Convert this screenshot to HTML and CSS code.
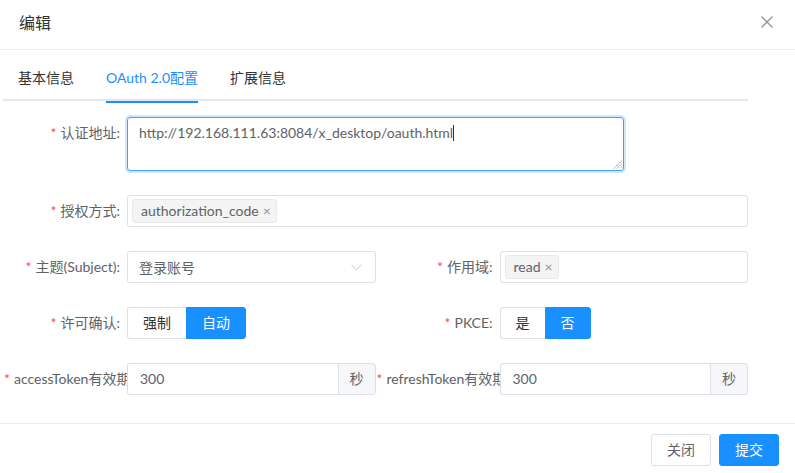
FILE: index.html
```html
<!DOCTYPE html>
<html lang="zh-CN">
<head>
<meta charset="utf-8">
<link rel="stylesheet" href="styles.css">
</head>
<body>
<div class="dialog">
  <div class="dlg-header">
    <span class="dlg-title">编辑</span>
    <svg class="dlg-close" width="12" height="12" viewBox="0 0 12 12"><path d="M0.5 0.5 L11.5 11.5 M11.5 0.5 L0.5 11.5" stroke="#909399" stroke-width="1.3" fill="none"/></svg>
  </div>
  <div class="dlg-body">
    <div class="tabs">
      <div class="tab">基本信息</div>
      <div class="tab active">OAuth 2.0配置</div>
      <div class="tab">扩展信息</div>
    </div>
    <div class="form">
      <div class="row">
        <div class="item full">
          <label class="lbl"><span class="req">*</span>认证地址:</label>
          <div class="ctl">
            <div class="textarea">http://192.168.111.63:8084/x_desktop/oauth.html<span class="caret"></span>
              <svg class="grip" width="9" height="9" viewBox="0 0 9 9"><path d="M8.5 1 L1 8.5 M8.5 4 L4 8.5 M8.5 7 L7 8.5" stroke="#555" stroke-width="1" stroke-dasharray="1 1" fill="none"/></svg>
            </div>
          </div>
        </div>
      </div>
      <div class="row">
        <div class="item full">
          <label class="lbl"><span class="req">*</span>授权方式:</label>
          <div class="ctl">
            <div class="input tags"><span class="tag">authorization_code<span class="tag-x">×</span></span></div>
          </div>
        </div>
      </div>
      <div class="row">
        <div class="item">
          <label class="lbl"><span class="req">*</span>主题(Subject):</label>
          <div class="ctl">
            <div class="input select">登录账号
              <svg class="arrow" width="11" height="7" viewBox="0 0 11 7"><path d="M0.5 0.8 L5.5 5.8 L10.5 0.8" stroke="#c0c4cc" stroke-width="1" fill="none"/></svg>
            </div>
          </div>
        </div>
        <div class="item">
          <label class="lbl"><span class="req">*</span>作用域:</label>
          <div class="ctl">
            <div class="input tags"><span class="tag">read<span class="tag-x">×</span></span></div>
          </div>
        </div>
      </div>
      <div class="row">
        <div class="item">
          <label class="lbl"><span class="req">*</span>许可确认:</label>
          <div class="ctl">
            <div class="radio-group"><span class="rb w59">强制</span><span class="rb on w60">自动</span></div>
          </div>
        </div>
        <div class="item">
          <label class="lbl"><span class="req">*</span>PKCE:</label>
          <div class="ctl">
            <div class="radio-group"><span class="rb w45">是</span><span class="rb on w46">否</span></div>
          </div>
        </div>
      </div>
      <div class="row">
        <div class="item">
          <label class="lbl clip"><span class="req">*</span>accessToken有效期:</label>
          <div class="ctl">
            <div class="input-group"><span class="ig-in">300</span><span class="ig-append">秒</span></div>
          </div>
        </div>
        <div class="item">
          <label class="lbl clip"><span class="req">*</span>refreshToken有效期:</label>
          <div class="ctl">
            <div class="input-group"><span class="ig-in">300</span><span class="ig-append">秒</span></div>
          </div>
        </div>
      </div>
    </div>
  </div>
  <div class="dlg-footer">
    <span class="btn">关闭</span>
    <span class="btn primary">提交</span>
  </div>
</div>
</body>
</html>
```
FILE: styles.css
```css
* { box-sizing: border-box; }
html, body { margin: 0; padding: 0; background: #fff; }
body {
  font-family: "Lato", "Noto Sans CJK SC", sans-serif;
  font-size: 14px;
  color: #606266;
  width: 795px;
  height: 473px;
  overflow: hidden;
}
.dialog { width: 795px; height: 473px; display: flex; flex-direction: column; }
.dlg-header {
  height: 50px;
  border-bottom: 1px solid #ebeef5;
  display: flex;
  align-items: center;
  justify-content: space-between;
  padding: 0 22px 0 19px;
}
.dlg-title { font-size: 16px; color: #303133; line-height: 20px; margin-top: -4px; }
.dlg-close { display: block; margin-top: -5px; }
.dlg-body { padding: 10px 0 0 3px; flex: 1; }
.tabs {
  width: 745px;
  height: 41px;
  border-bottom: 2px solid #e4e7ed;
  display: flex;
  padding-left: 15px;
  gap: 32px;
}
.tab {
  height: 41px;
  line-height: 36px;
  font-size: 14px;
  color: #303133;
  position: relative;
}
.tab.active { color: #1890ff; }
.tab.active::after {
  content: "";
  position: absolute;
  left: 0; right: 0; bottom: -2px;
  height: 2px;
  background: #1890ff;
}
.form { width: 745px; padding-top: 16px; }
.row { display: flex; margin-bottom: 24px; }
.item { display: flex; width: 50%; }
.item.full { width: 100%; }
.lbl {
  width: 124px;
  flex: none;
  text-align: right;
  padding-right: 7px;
  line-height: 32px;
  font-size: 14px;
  color: #606266;
  white-space: nowrap;
}
.lbl.clip { overflow: hidden; text-align: left; padding-left: 1px; padding-right: 0; }
.req { color: #ff4949; margin-right: 4px; }
.ctl { flex: 1; min-width: 0; }
.textarea {
  position: relative;
  width: 80%;
  height: 54px;
  border: 1px solid #409eff;
  box-shadow: 0 0 0 2px rgba(24,144,255,0.2);
  border-radius: 3px;
  padding: 3px 11px;
  line-height: 24px;
  color: #606266;
  white-space: nowrap;
}
.caret { display: inline-block; width: 1px; height: 16px; background: #303133; vertical-align: -3px; }
.grip { position: absolute; right: 1px; bottom: 1px; }
.input {
  height: 32px;
  border: 1px solid #dcdfe6;
  border-radius: 3px;
  display: flex;
  align-items: center;
  padding: 0 4px;
  position: relative;
}
.select { padding: 0 11px; color: #606266; }
.arrow { position: absolute; right: 13px; top: 12px; }
.tag {
  height: 24px;
  line-height: 22px;
  background: #f4f4f5;
  border: 1px solid #e9e9eb;
  border-radius: 3px;
  padding: 0 5px 0 8px;
  color: #606266;
  font-size: 14px;
  display: inline-flex;
  align-items: center;
}
.tag-x { color: #909399; margin-left: 4px; font-size: 14px; }
.radio-group { display: flex; height: 32px; }
.rb {
  height: 32px;
  line-height: 30px;
  text-align: center;
  border: 1px solid #dcdfe6;
  font-size: 14px;
  color: #303133;
}
.rb:first-child { border-radius: 3px 0 0 3px; border-right: none; }
.rb:last-child { border-radius: 0 3px 3px 0; }
.rb.on { background: #1890ff; border-color: #1890ff; color: #fff; }
.w59 { width: 59px; } .w60 { width: 60px; }
.w45 { width: 45px; } .w46 { width: 46px; }
.input-group { display: flex; height: 32px; }
.ig-in {
  flex: 1;
  border: 1px solid #dcdfe6;
  border-right: none;
  border-radius: 3px 0 0 3px;
  line-height: 30px;
  padding: 0 12px;
  color: #606266;
}
.ig-append {
  width: 38px;
  border: 1px solid #dcdfe6;
  border-radius: 0 3px 3px 0;
  background: #f5f7fa;
  text-align: center;
  line-height: 30px;
  color: #606266;
}
.dlg-footer {
  height: 50px;
  border-top: 1px solid #ebeef5;
  display: flex;
  justify-content: flex-end;
  align-items: flex-start;
  gap: 8px;
  padding: 10px 16px 0 0;
}
.btn {
  width: 60px;
  height: 32px;
  line-height: 30px;
  text-align: center;
  border: 1px solid #dcdfe6;
  border-radius: 3px;
  color: #606266;
  font-size: 14px;
}
.btn.primary { background: #1890ff; border-color: #1890ff; color: #fff; }
```
